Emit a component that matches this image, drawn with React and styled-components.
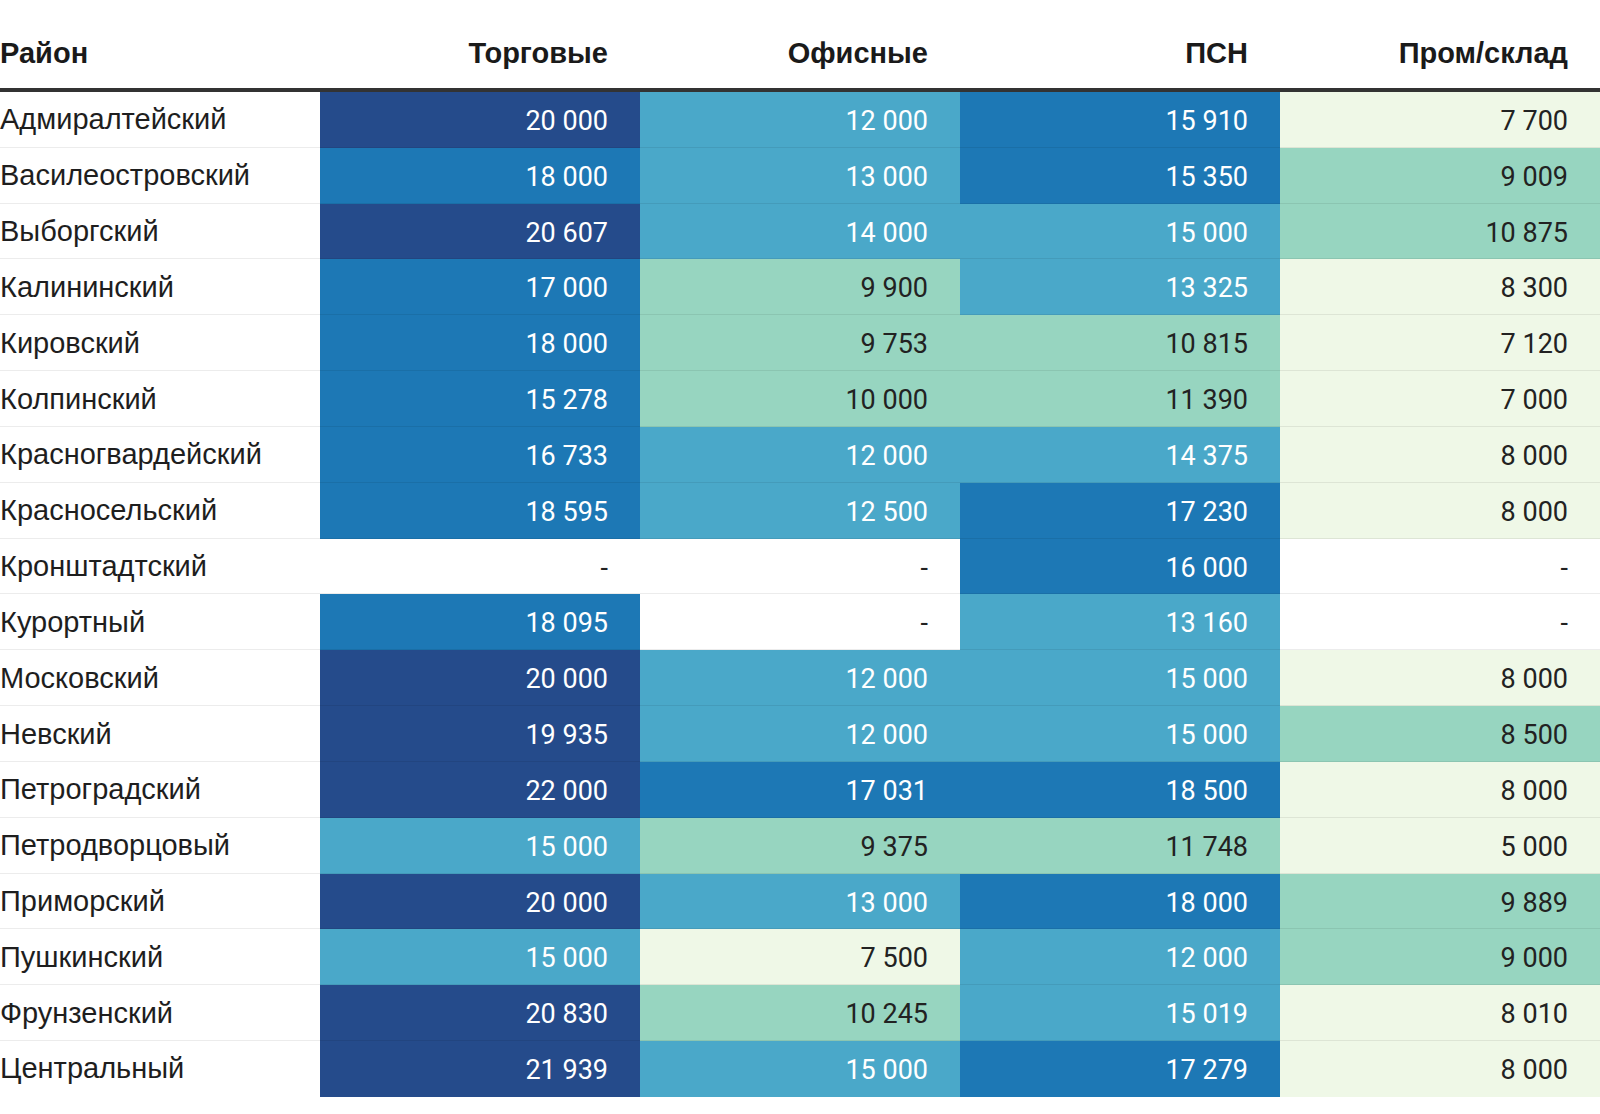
import React from "react";
import styled, { createGlobalStyle } from "styled-components";

const GlobalStyle = createGlobalStyle`
  html, body { margin: 0; padding: 0; background: #fff; }
  body { font-family: "Liberation Sans", Arial, sans-serif; color: #222; }
`;

const PALETTE = {
  n: { bg: "#254b8b", fg: "#fff" },
  m: { bg: "#1d78b5", fg: "#fff" },
  l: { bg: "#4aa8c9", fg: "#fff" },
  t: { bg: "#97d5c0", fg: "#222" },
  p: { bg: "#eff8e7", fg: "#222" },
  w: { bg: "#ffffff", fg: "#222" },
};

const HEAD = ["Торговые", "Офисные", "ПСН", "Пром/склад"];

const ROWS = [
  ["Адмиралтейский", ["20 000", "n"], ["12 000", "l"], ["15 910", "m"], ["7 700", "p"]],
  ["Василеостровский", ["18 000", "m"], ["13 000", "l"], ["15 350", "m"], ["9 009", "t"]],
  ["Выборгский", ["20 607", "n"], ["14 000", "l"], ["15 000", "l"], ["10 875", "t"]],
  ["Калининский", ["17 000", "m"], ["9 900", "t"], ["13 325", "l"], ["8 300", "p"]],
  ["Кировский", ["18 000", "m"], ["9 753", "t"], ["10 815", "t"], ["7 120", "p"]],
  ["Колпинский", ["15 278", "m"], ["10 000", "t"], ["11 390", "t"], ["7 000", "p"]],
  ["Красногвардейский", ["16 733", "m"], ["12 000", "l"], ["14 375", "l"], ["8 000", "p"]],
  ["Красносельский", ["18 595", "m"], ["12 500", "l"], ["17 230", "m"], ["8 000", "p"]],
  ["Кронштадтский", ["-", "w"], ["-", "w"], ["16 000", "m"], ["-", "w"]],
  ["Курортный", ["18 095", "m"], ["-", "w"], ["13 160", "l"], ["-", "w"]],
  ["Московский", ["20 000", "n"], ["12 000", "l"], ["15 000", "l"], ["8 000", "p"]],
  ["Невский", ["19 935", "n"], ["12 000", "l"], ["15 000", "l"], ["8 500", "t"]],
  ["Петроградский", ["22 000", "n"], ["17 031", "m"], ["18 500", "m"], ["8 000", "p"]],
  ["Петродворцовый", ["15 000", "l"], ["9 375", "t"], ["11 748", "t"], ["5 000", "p"]],
  ["Приморский", ["20 000", "n"], ["13 000", "l"], ["18 000", "m"], ["9 889", "t"]],
  ["Пушкинский", ["15 000", "l"], ["7 500", "p"], ["12 000", "l"], ["9 000", "t"]],
  ["Фрунзенский", ["20 830", "n"], ["10 245", "t"], ["15 019", "l"], ["8 010", "p"]],
  ["Центральный", ["21 939", "n"], ["15 000", "l"], ["17 279", "m"], ["8 000", "p"]],
];

const Table = styled.div`
  width: 1600px;
  display: flex;
  flex-direction: column;
`;

const HeaderRow = styled.div`
  display: grid;
  grid-template-columns: repeat(5, 320px);
  height: 88px;
  border-bottom: 4px solid #333;
`;

const HeadCell = styled.div`
  font-family: "Liberation Sans", Arial, sans-serif;
  font-weight: 700;
  font-size: 29px;
  line-height: 33px;
  color: #1a1a1a;
  padding: 37px ${(p) => (p.$first ? "0" : "32px")} 18px 0;
  text-align: ${(p) => (p.$first ? "left" : "right")};
`;

const Row = styled.div`
  display: grid;
  grid-template-columns: repeat(5, 320px);
  height: 55.83px;
  box-sizing: border-box;
  position: relative;
  &:not(:last-child)::after {
    content: "";
    position: absolute;
    left: 0;
    right: 0;
    bottom: 0;
    height: 1px;
    background: rgba(0, 0, 0, 0.075);
  }
`;

const NameCell = styled.div`
  display: flex;
  align-items: center;
  font-family: "Liberation Sans", Arial, sans-serif;
  font-size: 29px;
  color: #1e1e1e;
  padding-bottom: 0;
  white-space: nowrap;
`;

const ValueCell = styled.div`
  display: flex;
  align-items: center;
  justify-content: flex-end;
  padding: 2px 32px 0 0;
  font-family: Roboto, "Liberation Sans", sans-serif;
  font-size: 27px;
  background: ${(p) => PALETTE[p.$tone].bg};
  color: ${(p) => PALETTE[p.$tone].fg};
  white-space: pre;
`;

export default function App() {
  return (
    <>
      <GlobalStyle />
      <Table>
        <HeaderRow>
          <HeadCell $first>Район</HeadCell>
          {HEAD.map((h) => (
            <HeadCell key={h}>{h}</HeadCell>
          ))}
        </HeaderRow>
        {ROWS.map(([name, ...cells]) => (
          <Row key={name}>
            <NameCell>{name}</NameCell>
            {cells.map(([v, tone], i) => (
              <ValueCell key={i} $tone={tone}>
                {v}
              </ValueCell>
            ))}
          </Row>
        ))}
      </Table>
    </>
  );
}
